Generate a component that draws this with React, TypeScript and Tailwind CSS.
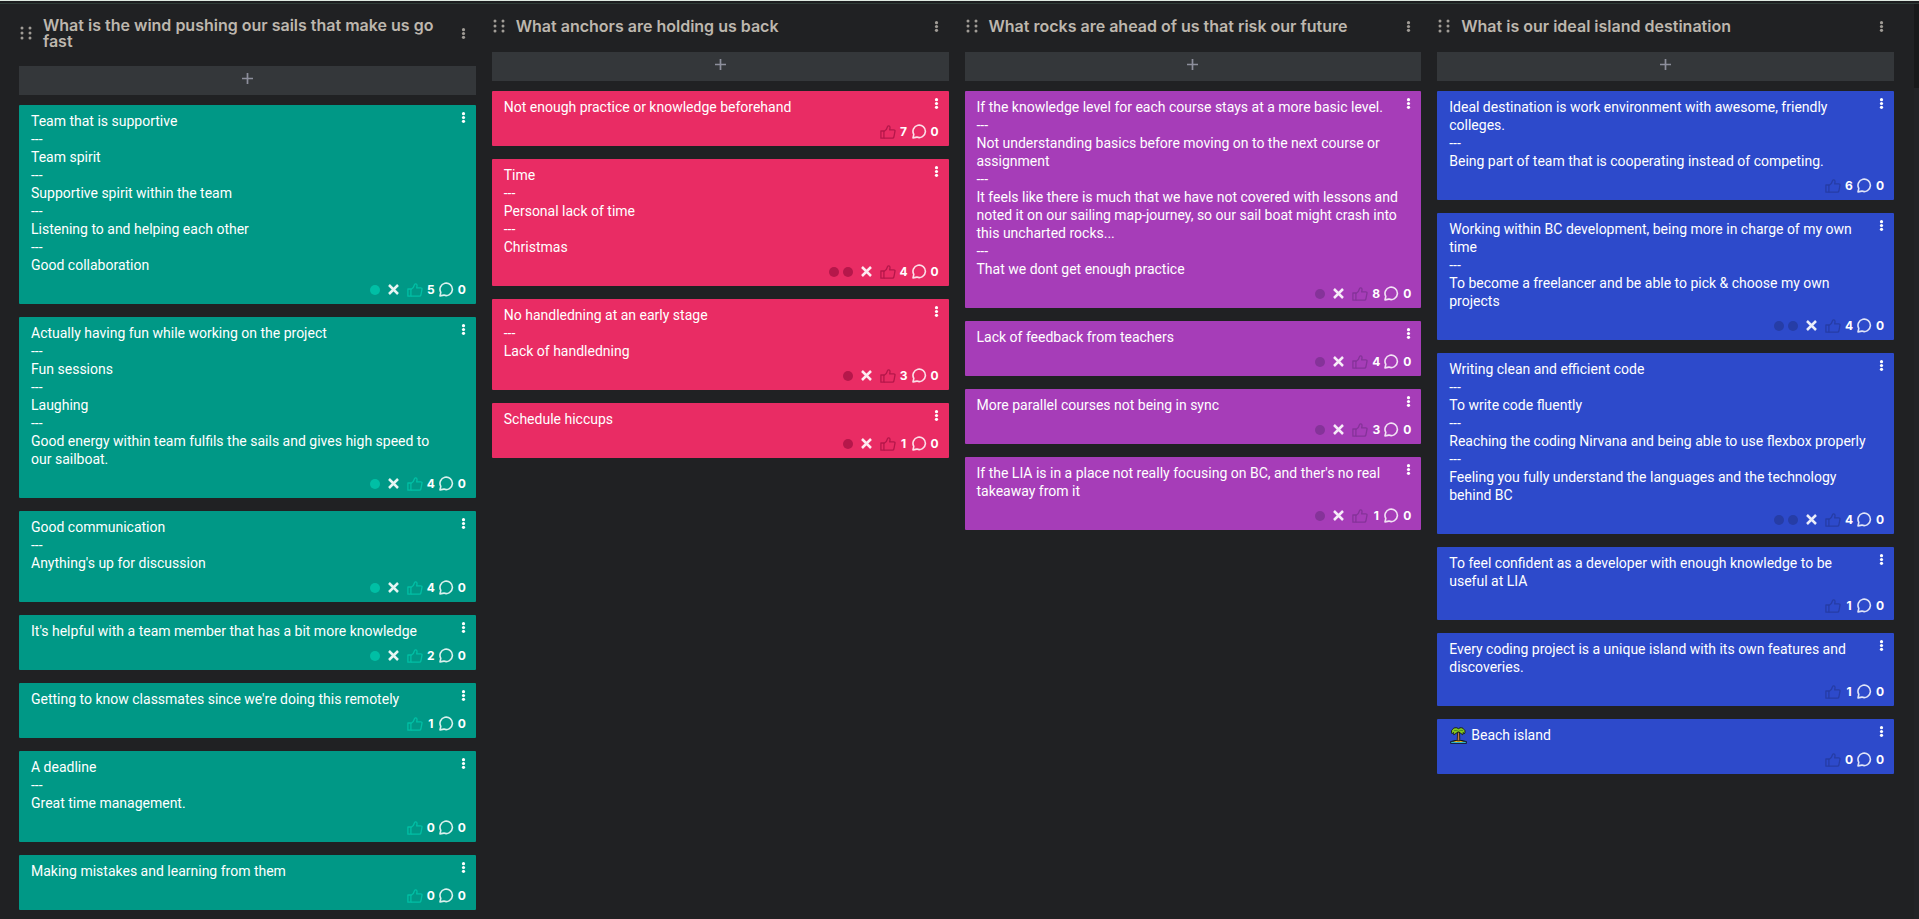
import type { ReactNode } from "react";

type Note = { text: string[]; merged?: number; likes: number; palm?: boolean };
type Theme = { card: string; accent: string; dot: string };
type ColumnData = { title: string; theme: Theme; notes: Note[] };

const columns: ColumnData[] = [
  {
    title: "What is the wind pushing our sails that make us go fast",
    theme: { card: "bg-[#009886]", accent: "text-[#00bfa5]", dot: "bg-[#00bfa5]" },
    notes: [
      {
        text: ["Team that is supportive", "Team spirit", "Supportive spirit within the team", "Listening to and helping each other", "Good collaboration"],
        merged: 1,
        likes: 5,
      },
      {
        text: ["Actually having fun while working on the project", "Fun sessions", "Laughing", "Good energy within team fulfils the sails and gives high speed to our sailboat."],
        merged: 1,
        likes: 4,
      },
      { text: ["Good communication", "Anything's up for discussion"], merged: 1, likes: 4 },
      { text: ["It's helpful with a team member that has a bit more knowledge"], merged: 1, likes: 2 },
      { text: ["Getting to know classmates since we're doing this remotely"], likes: 1 },
      { text: ["A deadline", "Great time management."], likes: 0 },
      { text: ["Making mistakes and learning from them"], likes: 0 },
    ],
  },
  {
    title: "What anchors are holding us back",
    theme: { card: "bg-[#e92c64]", accent: "text-[#b5174a]", dot: "bg-[#b5174a]" },
    notes: [
      { text: ["Not enough practice or knowledge beforehand"], likes: 7 },
      { text: ["Time", "Personal lack of time", "Christmas"], merged: 2, likes: 4 },
      { text: ["No handledning at an early stage", "Lack of handledning"], merged: 1, likes: 3 },
      { text: ["Schedule hiccups"], merged: 1, likes: 1 },
    ],
  },
  {
    title: "What rocks are ahead of us that risk our future",
    theme: { card: "bg-[#a63db8]", accent: "text-[#853399]", dot: "bg-[#853399]" },
    notes: [
      {
        text: [
          "If the knowledge level for each course stays at a more basic level.",
          "Not understanding basics before moving on to the next course or assignment",
          "It feels like there is much that we have not covered with lessons and noted it on our sailing map-journey, so our sail boat might crash into this uncharted rocks...",
          "That we dont get enough practice",
        ],
        merged: 1,
        likes: 8,
      },
      { text: ["Lack of feedback from teachers"], merged: 1, likes: 4 },
      { text: ["More parallel courses not being in sync"], merged: 1, likes: 3 },
      { text: ["If the LIA is in a place not really focusing on BC, and ther's no real takeaway from it"], merged: 1, likes: 1 },
    ],
  },
  {
    title: "What is our ideal island destination",
    theme: { card: "bg-[#2d4acb]", accent: "text-[#263da6]", dot: "bg-[#263da6]" },
    notes: [
      {
        text: ["Ideal destination is work environment with awesome, friendly colleges.", "Being part of team that is cooperating instead of competing."],
        likes: 6,
      },
      {
        text: ["Working within BC development, being more in charge of my own time", "To become a freelancer and be able to pick & choose my own projects"],
        merged: 2,
        likes: 4,
      },
      {
        text: [
          "Writing clean and efficient code",
          "To write code fluently",
          "Reaching the coding Nirvana and being able to use flexbox properly",
          "Feeling you fully understand the languages and the technology behind BC",
        ],
        merged: 2,
        likes: 4,
      },
      { text: ["To feel confident as a developer with enough knowledge to be useful at LIA"], likes: 1 },
      { text: ["Every coding project is a unique island with its own features and discoveries."], likes: 1 },
      { text: ["Beach island"], likes: 0, palm: true },
    ],
  },
];

function KebabIcon() {
  return (
    <svg width="5" height="11" viewBox="0 0 5 11" fill="currentColor" aria-hidden="true">
      <circle cx="2.5" cy="1.7" r="1.6" />
      <circle cx="2.5" cy="5.5" r="1.6" />
      <circle cx="2.5" cy="9.3" r="1.6" />
    </svg>
  );
}

function GripIcon() {
  return (
    <svg width="12" height="14" viewBox="0 0 12 14" fill="currentColor" aria-hidden="true">
      {[2, 7, 12].map((y) => (
        <g key={y}>
          <circle cx="2" cy={y} r="1.5" />
          <circle cx="10" cy={y} r="1.5" />
        </g>
      ))}
    </svg>
  );
}

function PlusIcon() {
  return (
    <svg width="11" height="11" viewBox="0 0 11 11" stroke="currentColor" strokeWidth="1.7" aria-hidden="true">
      <path d="M5.5 0v11M0 5.5h11" />
    </svg>
  );
}

function CrossIcon() {
  return (
    <svg width="11" height="11" viewBox="0 0 11 11" stroke="currentColor" strokeWidth="2.5" aria-hidden="true">
      <path d="M1 1l9 9M10 1l-9 9" />
    </svg>
  );
}

function LikeIcon() {
  return (
    <svg width="16" height="14" viewBox="0 0 16 14" fill="none" stroke="currentColor" strokeWidth="1.3" strokeLinejoin="round" aria-hidden="true">
      <path d="M0.9 6h3v7.2H0.9z" />
      <path d="M3.900 6.500L6.300 4.600 7.600 1.500Q8 .7 8.900 .9 10.200 1.300 10 2.800L9.700 4.900H13.800q1.400 0 1.200 1.200L13.900 12q-.3 1.200-1.400 1.200H3.900" />
    </svg>
  );
}

function CommentIcon() {
  return (
    <svg width="15" height="15" viewBox="0 0 15 15" fill="none" stroke="currentColor" strokeWidth="1.6" strokeLinejoin="round" aria-hidden="true">
      <path d="M1 13.900L1.800 10.400A6.200 6.200 0 1 1 4.900 13.100z" />
    </svg>
  );
}

function PalmIcon() {
  return (
    <svg width="17" height="17" viewBox="0 0 17 17" role="img" aria-label="Beach with palm tree" className="mr-1 ml-px inline-block align-[-4px]">
      <path d="M.3 16.700v-2.400L5 12.900h7l4.700 1.400v2.400z" fill="#101418" />
      <path d="M1.200 15.900v-1.100h14.600v1.100z" fill="#35c5d8" />
      <path d="M3.200 15q5.300-3 10.600 0z" fill="#f7b516" />
      <path d="M7.600 5h1.900l.3 8.800H7.200z" fill="#c07a3c" stroke="#101418" strokeWidth=".8" />
      <path d="M8.500 1.700Q6.800 .3 4.900 .8 3.300 1 2.700 2.300 1.200 3 1.500 5.200q.1 1 .6 1.500.6-.8 1.400-1.200-.3 1.200.3 2.300Q5.500 6.600 8.500 4.800q2.600 1.700 4.200 3 .6-1.100.3-2.300.8.400 1.400 1.200.5-.5.600-1.500.3-2.200-1.200-2.900Q13.200 1 11.700 .8 10 .4 8.500 1.700z" fill="#86c81e" stroke="#101418" strokeWidth=".9" />
      <path d="M4 3.700q2.300-1 4.500.7 2.200-1.700 4.600-.7" fill="none" stroke="#3f7d18" strokeWidth=".8" />
    </svg>
  );
}

function IconButton({ label, className, children }: { label: string; className?: string; children: ReactNode }) {
  return (
    <button type="button" aria-label={label} className={`flex shrink-0 items-center justify-center ${className ?? ""}`}>
      {children}
    </button>
  );
}

function Card({ note, theme }: { note: Note; theme: Theme }) {
  return (
    <article className={`rounded-[1px] pt-[7px] pr-[10px] pb-[6px] pl-3 text-white ${theme.card}`}>
      <div className="flex items-start justify-between">
        <div className="min-w-0 flex-1 pr-2 text-sm leading-[18px]">
          {note.text.map((line, i) => (
            <div key={line}>
              {i > 0 && <div>---</div>}
              <p>
                {note.palm && <PalmIcon />}
                {line}
              </p>
            </div>
          ))}
        </div>
        <IconButton label="Card menu">
          <KebabIcon />
        </IconButton>
      </div>
      <footer className="mt-[7px] flex h-[17px] items-center justify-end font-['Inter',sans-serif] text-xs font-bold">
        {note.merged && (
          <>
            <span className="flex gap-1">
              {Array.from({ length: note.merged }, (_, i) => (
                <span key={i} className={`size-[10px] rounded-full ${theme.dot}`} />
              ))}
            </span>
            <IconButton label="Unmerge" className="mx-2 text-white/90">
              <CrossIcon />
            </IconButton>
          </>
        )}
        <IconButton label="Like" className={theme.accent}>
          <LikeIcon />
        </IconButton>
        <span className="w-4 text-center">{note.likes}</span>
        <IconButton label="Comments" className="text-white/85">
          <CommentIcon />
        </IconButton>
        <span className="ml-1 w-2 text-center">0</span>
      </footer>
    </article>
  );
}

function Column({ column }: { column: ColumnData }) {
  return (
    <section className="min-w-0">
      <header className="flex min-h-[18px] items-center text-[#a09c96]">
        <IconButton label="Move column" className="mr-[11px] ml-px">
          <GripIcon />
        </IconButton>
        <h2 className="min-w-0 flex-1 pr-4 font-['Inter',sans-serif] text-base leading-4 font-semibold text-[#bdb7ae]">{column.title}</h2>
        <IconButton label="Column menu" className="mr-[10px]">
          <KebabIcon />
        </IconButton>
      </header>
      <button type="button" aria-label="Add a card" className="mt-[17px] mb-[10px] flex h-[29px] w-full items-start justify-center bg-[#34373a] pt-[7px] text-[#8d8f9c]">
        <PlusIcon />
      </button>
      <div className="flex flex-col gap-[13px]">
        {column.notes.map((note) => (
          <Card key={note.text[0]} note={note} theme={column.theme} />
        ))}
      </div>
    </section>
  );
}

export default function App() {
  return (
    <div className="flex min-h-screen flex-col bg-[#202123] font-['Roboto',sans-serif]">
      <div className="h-px bg-[#dfe9e1]" />
      <div className="h-[3px] border-b border-[#2f3b37] bg-[#1c1d1f]" />
      <div className="flex flex-1">
        <main className="grid min-w-0 flex-1 grid-cols-4 content-start gap-4 pt-[13px] pr-5 pb-2 pl-[19px]">
          {columns.map((column) => (
            <Column key={column.title} column={column} />
          ))}
        </main>
        <div className="w-[5px] bg-[#222326]">
          <div className="h-[84px] bg-[#18191a]" />
        </div>
      </div>
    </div>
  );
}
